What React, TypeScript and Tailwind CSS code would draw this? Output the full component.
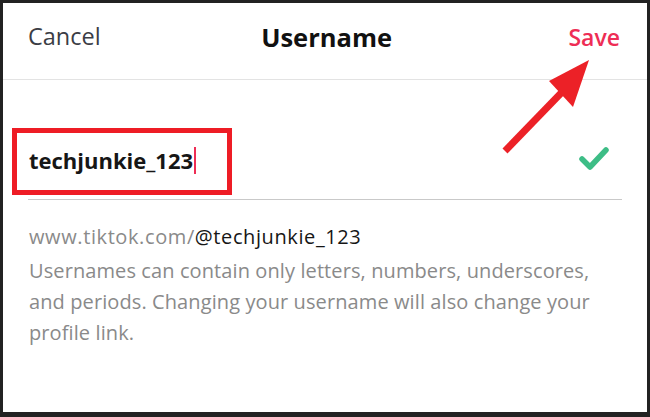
import React from "react";

const font = { fontFamily: "'Open Sans', Lato, sans-serif" };

const CheckIcon: React.FC = () => (
  <svg width="32" height="26" viewBox="0 0 32 26" fill="none">
    <path d="M4 13 L12 21 L28 4" stroke="#3dbd86" strokeWidth="5.5" strokeLinecap="round" strokeLinejoin="round" />
  </svg>
);

// red annotation arrow pointing at Save
const Arrow: React.FC = () => (
  <svg width="110" height="110" viewBox="0 0 110 110" className="absolute left-[490px] top-[50px]">
    <line x1="12" y1="98" x2="72" y2="36" stroke="#ec2127" strokeWidth="7" />
    <polygon points="96,7 56,28 80,54" fill="#ec2127" />
  </svg>
);

export default function App() {
  return (
    <div className="w-[650px] h-[417px] bg-[#222222] pt-[3px] pl-[3px] pr-[3px] pb-[5px]" style={font}>
      <div className="relative w-full h-full bg-white">
        <div className="h-[77px] flex items-center justify-between pl-[25px] pr-[27px] pb-[8px] border-b border-[#e3e3e3]">
          <span className="text-[23.5px] text-[#3b3d45]">Cancel</span>
          <span className="text-[25.5px] font-bold text-[#111] -ml-[16px]">Username</span>
          <span className="text-[23px] font-semibold text-[#ee2d55]">Save</span>
        </div>

        <div className="mx-[25px] h-[120px] flex items-center justify-between border-b border-[#c9c9c9] pt-[42px]">
          <div className="flex items-center">
            <span className="text-[22px] font-bold text-[#161616] pl-[1px]">techjunkie_123</span>
            <span className="w-[2px] h-[27px] bg-[#ee2d55] ml-[1px]" />
          </div>
          <div className="mr-[12px] mt-[-4px]">
            <CheckIcon />
          </div>
        </div>

        <div className="px-[26px] pt-[22px]">
          <p className="text-[20px] tracking-[0.6px] text-[#8a8a8a]">
            www.tiktok.com/<span className="text-[#161616]">@techjunkie_123</span>
          </p>
          <p className="text-[20px] tracking-[0.1px] leading-[31px] text-[#8a8a8a] mt-[3px] pr-[20px]">
            Usernames can contain only letters, numbers, underscores, and periods. Changing your username will also change your profile link.
          </p>
        </div>

        <div className="absolute left-[9px] top-[125px] w-[220px] h-[67px] border-[5px] border-[#ee1c25]" />
        <Arrow />
      </div>
    </div>
  );
}
